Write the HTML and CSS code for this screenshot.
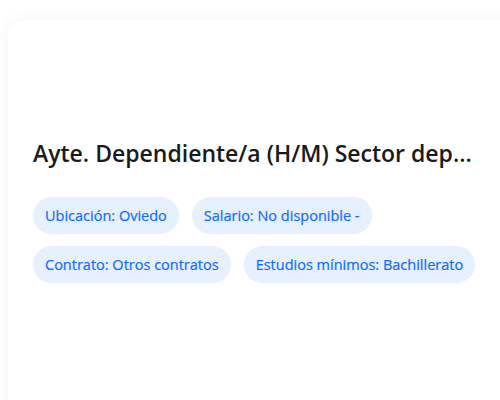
FILE: index.html
```html
<!DOCTYPE html>
<html lang="es">
<head>
<meta charset="utf-8">
<link rel="stylesheet" href="styles.css">
</head>
<body>
<div class="card">
  <div class="media"></div>
  <h2 class="title">Ayte. Dependiente/a (H/M) Sector dep...</h2>
  <div class="tags">
    <span class="tag">Ubicación: Oviedo</span>
    <span class="tag">Salario: No disponible -</span>
    <span class="tag">Contrato: Otros contratos</span>
    <span class="tag">Estudios mínimos: Bachillerato</span>
  </div>
</div>
</body>
</html>
```
FILE: styles.css
```css
html, body {
  overflow: hidden;
}
body {
  margin: 0;
  padding: 20px 0 0 8px;
  background: #ffffff;
  font-family: "Open Sans", "Noto Sans", sans-serif;
}
.card {
  width: 540px;
  min-height: 420px;
  background: #ffffff;
  border-radius: 16px;
  box-shadow: 0 0 16px rgba(0, 0, 0, 0.06);
  padding: 24px 24px;
  box-sizing: border-box;
}
.media {
  height: 94px;
}
.title {
  margin: 0 0 29px 1px;
  font-size: 23px;
  font-weight: 600;
  line-height: 30px;
  color: #1a1a1a;
  white-space: nowrap;
}
.tags {
  display: flex;
  flex-wrap: wrap;
  gap: 12px;
  width: 452px;
}
.tag {
  display: inline-flex;
  align-items: center;
  height: 37px;
  padding: 0 12px;
  border-radius: 19px;
  background: #e6f0ff;
  color: #0f6dff;
  font-size: 14.5px;
  font-weight: 500;
  margin-left: 1px;
  -webkit-text-stroke: 0.2px #0f6dff;
}
```
